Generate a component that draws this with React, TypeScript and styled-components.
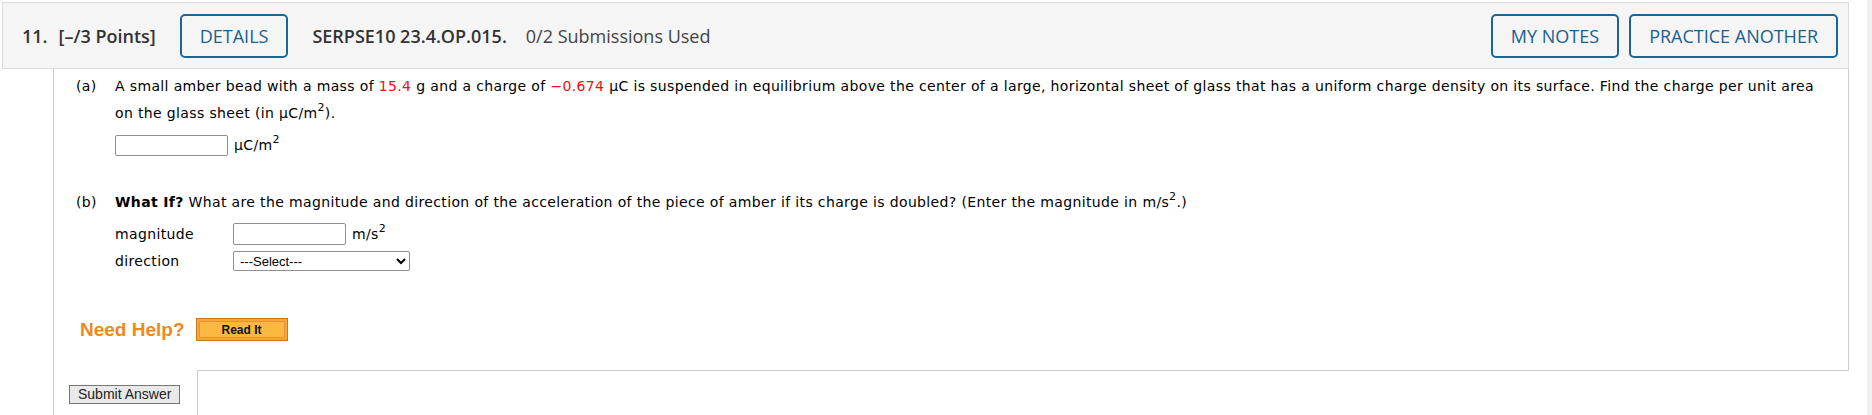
import React from "react";
import styled, { createGlobalStyle } from "styled-components";

const GlobalStyle = createGlobalStyle`
    html, body {
        margin: 0;
        padding: 0;
        background-color: #ffffff;
    }
    body {
        font-family: "DejaVu Sans", Verdana, sans-serif;
        color: #000;
    }
`;

const Screen = styled.div`
    display: flex;
    height: 100vh;
    overflow: hidden;
`;

const Main = styled.div`
    flex: 1;
    display: flex;
    flex-direction: column;
    padding: 2px 18px 0 2px;
`;

const ScrollTrack = styled.div`
    width: 5px;
    background-color: #f1f1f1;
`;

const Header = styled.div`
    display: flex;
    align-items: center;
    box-sizing: border-box;
    height: 67px;
    padding: 0 10px 0 19px;
    border: 1px solid #dddddd;
    background-color: #f5f5f5;
    font-family: "Open Sans", "Liberation Sans", sans-serif;
    font-size: 18px;
    color: #333;
`;

const Strong = styled.span<{ $gap?: number }>`
    font-weight: 600;
    margin-right: ${(p) => p.$gap ?? 0}px;
    white-space: nowrap;
`;

const Muted = styled.span`
    color: #444;
    white-space: nowrap;
`;

const OutlineButton = styled.button`
    box-sizing: border-box;
    height: 44px;
    padding: 0 18px;
    border: 2px solid #1b6698;
    border-radius: 5px;
    background: transparent;
    color: #1a5f90;
    font-family: "Open Sans", "Liberation Sans", sans-serif;
    font-size: 18px;
    cursor: pointer;
`;

const DetailsButton = styled(OutlineButton)`
    margin: 0 24px 0 0;
`;

const RightTools = styled.div`
    margin-left: auto;
    display: flex;
    gap: 10px;
`;

const Body = styled.div`
    flex: 1;
    display: flex;
    flex-direction: column;
    margin-left: 51px;
    border-left: 1px solid #cccccc;
`;

const Panel = styled.div`
    padding: 4px 0 29px 22px;
    border-right: 1px solid #cccccc;
    font-size: 14px;
    letter-spacing: 0.36px;
`;

const PartRow = styled.div<{ $top?: number }>`
    display: flex;
    line-height: 27px;
    margin-top: ${(p) => p.$top ?? 0}px;
`;

const PartLabel = styled.div`
    width: 39px;
    flex-shrink: 0;
`;

const PartText = styled.div`
    flex: 1;
    padding-right: 30px;
`;

const Red = styled.span`
    color: #ee1111;
`;

const Bold = styled.b`
    font-weight: 700;
`;

const Sup = styled.sup`
    font-size: 11px;
    line-height: 0;
    vertical-align: 7px;
`;

const AnswerRow = styled.div<{ $top?: number; $h?: number }>`
    display: flex;
    align-items: center;
    height: ${(p) => p.$h ?? 21}px;
    margin-top: ${(p) => p.$top ?? 0}px;
`;

const FieldLabel = styled.div`
    width: 118px;
`;

const AnswerInput = styled.input<{ $h?: number }>`
    box-sizing: border-box;
    width: 113px;
    height: ${(p) => p.$h ?? 21}px;
    margin: 0 6px 0 0;
    border: 1px solid #8f8f8f;
    border-radius: 2px;
    padding: 0 3px;
    background: #fff;
    outline: none;
`;

const Unit = styled.span`
    white-space: nowrap;
`;

const DirectionSelect = styled.select`
    box-sizing: border-box;
    width: 177px;
    height: 20px;
    margin: 0;
    padding: 0 2px;
    border: 1px solid #8f8f8f;
    border-radius: 2px;
    background: #fff;
    font-family: "Liberation Sans", Arial, sans-serif;
    font-size: 13px;
    letter-spacing: 0;
    color: #000;
`;

const HelpRow = styled.div`
    display: flex;
    align-items: center;
    gap: 11px;
    margin: 47px 0 0 4px;
    height: 23px;
    letter-spacing: 0;
`;

const NeedHelp = styled.span`
    font-family: "Liberation Sans", Arial, sans-serif;
    font-weight: 700;
    font-size: 19px;
    color: #f0891d;
`;

const ReadItButton = styled.button`
    box-sizing: border-box;
    width: 92px;
    height: 23px;
    padding: 0;
    border: 1px solid #c9781f;
    background-color: #fcb942;
    box-shadow: inset 0 0 0 2px #f9a43a, inset 0 0 0 3px #e39334;
    font-family: "Liberation Sans", Arial, sans-serif;
    font-weight: 700;
    font-size: 12px;
    color: #111;
    cursor: pointer;
`;

const Footer = styled.div`
    flex: 1;
    display: flex;
`;

const SubmitCell = styled.div`
    width: 143px;
    flex-shrink: 0;
    padding: 14px 0 0 15px;
    box-sizing: border-box;
`;

const SubmitButton = styled.button`
    box-sizing: border-box;
    height: 19px;
    padding: 0 8px;
    border: 1px solid #767676;
    background-color: #e9e9e9;
    font-family: "Liberation Sans", Arial, sans-serif;
    font-size: 14px;
    line-height: 17px;
    color: #222;
`;

const Tail = styled.div`
    flex: 1;
    border-top: 1px solid #cccccc;
    border-left: 1px solid #cccccc;
`;

function App() {
    return (
        <>
            <GlobalStyle />
            <Screen>
                <Main>
                    <Header>
                        <Strong $gap={11}>11.</Strong>
                        <Strong $gap={24}>[–/3 Points]</Strong>
                        <DetailsButton>DETAILS</DetailsButton>
                        <Strong $gap={19}>SERPSE10 23.4.OP.015.</Strong>
                        <Muted>0/2 Submissions Used</Muted>
                        <RightTools>
                            <OutlineButton>MY NOTES</OutlineButton>
                            <OutlineButton>PRACTICE ANOTHER</OutlineButton>
                        </RightTools>
                    </Header>

                    <Body>
                        <Panel>
                            <PartRow>
                                <PartLabel>(a)</PartLabel>
                                <PartText>
                                    A small amber bead with a mass of <Red>15.4</Red> g and a charge of{" "}
                                    <Red>−0.674</Red> µC is suspended in equilibrium above the center of a large,
                                    horizontal sheet of glass that has a uniform charge density on its surface. Find
                                    the charge per unit area on the glass sheet (in µC/m<Sup>2</Sup>).
                                    <AnswerRow $top={8}>
                                        <AnswerInput type="text" />
                                        <Unit>
                                            µC/m<Sup>2</Sup>
                                        </Unit>
                                    </AnswerRow>
                                </PartText>
                            </PartRow>

                            <PartRow $top={33}>
                                <PartLabel>(b)</PartLabel>
                                <PartText>
                                    <Bold>What If?</Bold> What are the magnitude and direction of the acceleration
                                    of the piece of amber if its charge is doubled? (Enter the magnitude in m/s
                                    <Sup>2</Sup>.)
                                    <AnswerRow $top={7} $h={22}>
                                        <FieldLabel>magnitude</FieldLabel>
                                        <AnswerInput type="text" $h={22} />
                                        <Unit>
                                            m/s<Sup>2</Sup>
                                        </Unit>
                                    </AnswerRow>
                                    <AnswerRow $top={6} $h={20}>
                                        <FieldLabel>direction</FieldLabel>
                                        <DirectionSelect defaultValue="">
                                            <option value="">---Select---</option>
                                            <option value="up">upward</option>
                                            <option value="down">downward</option>
                                        </DirectionSelect>
                                    </AnswerRow>
                                </PartText>
                            </PartRow>

                            <HelpRow>
                                <NeedHelp>Need Help?</NeedHelp>
                                <ReadItButton>Read It</ReadItButton>
                            </HelpRow>
                        </Panel>

                        <Footer>
                            <SubmitCell>
                                <SubmitButton>Submit Answer</SubmitButton>
                            </SubmitCell>
                            <Tail />
                        </Footer>
                    </Body>
                </Main>
                <ScrollTrack />
            </Screen>
        </>
    );
}

export default App;
